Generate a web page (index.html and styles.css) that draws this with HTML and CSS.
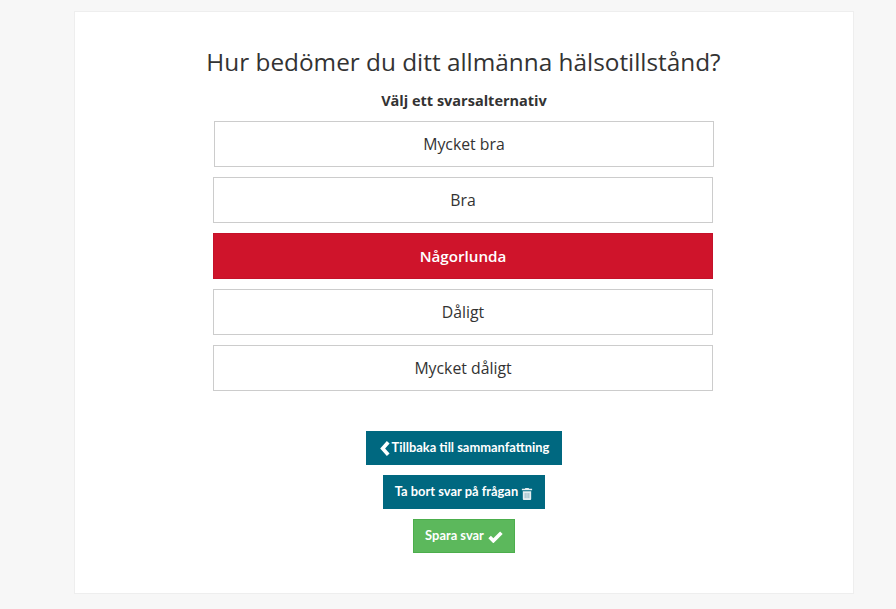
FILE: index.html
```html
<!DOCTYPE html>
<html lang="sv">
<head>
<meta charset="utf-8">
<title>Hälsotillstånd</title>
<link rel="stylesheet" href="styles.css">
</head>
<body>
<main class="card">
  <h1 class="title">Hur bedömer du ditt allmänna hälsotillstånd?</h1>
  <p class="hint">Välj ett svarsalternativ</p>
  <div class="options">
    <button class="option option-first">Mycket bra</button>
    <button class="option">Bra</button>
    <button class="option selected">Någorlunda</button>
    <button class="option">Dåligt</button>
    <button class="option">Mycket dåligt</button>
  </div>
  <div class="actions">
    <button class="btn btn-blue btn-back"><svg class="ico-chev" viewBox="0 0 10 14"><path d="M8 1.200 2.800 7 8 12.800" fill="none" stroke="#fff" stroke-width="3.400"/></svg>Tillbaka till sammanfattning</button>
    <button class="btn btn-blue btn-del">Ta bort svar på frågan<svg class="ico-trash" viewBox="0 0 12 14"><path d="M4 2V1h4v1h3.500v1.500H.5V2zM1.500 4.500h9V13a1 1 0 0 1-1 1h-7a1 1 0 0 1-1-1z" fill="#e4edf0"/><path d="M4 6.500V12M6 6.500V12M8 6.500V12" stroke="#7fa9b7" stroke-width=".8"/></svg></button>
    <button class="btn btn-green btn-save">Spara svar<svg class="ico-check" viewBox="0 0 14 11"><path d="M1.500 5.500 5 9l7.500-7.500" fill="none" stroke="#fff" stroke-width="3.400"/></svg></button>
  </div>
</main>
</body>
</html>
```
FILE: styles.css
```css
* { box-sizing: border-box; }
html, body { margin: 0; height: 100%; }
body {
  background: #f7f7f7;
  font-family: "Open Sans", "Noto Sans", sans-serif;
  color: #333;
  padding: 11px 42px 15px 74px;
  overflow: hidden;
}
.card {
  width: 780px;
  height: 583px;
  background: #fff;
  border: 1px solid #eee;
  padding-top: 33px;
  display: flex;
  flex-direction: column;
  align-items: center;
}
.title {
  margin: 0 0 0 -1px;
  font-size: 24.350px;
  font-weight: 400;
  line-height: 34px;
}
.hint {
  margin: 12px 0 0;
  font-size: 14.500px;
  font-weight: 700;
  line-height: 20px;
}
.options {
  margin: 10px 0 0 -2px;
  display: flex;
  flex-direction: column;
  gap: 10px;
  width: 500px;
}
.option {
  height: 46px;
  width: 500px;
  background: #fff;
  border: 1px solid #ccc;
  font-family: inherit;
  font-size: 15.800px;
  color: #333;
  padding: 0;
}
.option-first { margin-left: 1px; }
.selected {
  background: #cf142b;
  border-color: #c4122a;
  color: #fff;
  font-size: 15.200px;
  font-weight: 600;
}
.actions {
  margin-top: 40px;
  display: flex;
  flex-direction: column;
  align-items: center;
  gap: 10px;
}
.btn {
  height: 34px;
  border: 1px solid transparent;
  font-family: Lato, "Open Sans", sans-serif;
  font-size: 12.900px;
  font-weight: 700;
  color: #fff;
  padding: 0 0 2px;
  display: flex;
  align-items: center;
  justify-content: center;
}
.btn-back { width: 196px; }
.btn-del { width: 162px; }
.btn-save { width: 102px; }
.btn-blue { background: #006880; }
.btn-green { background: #5cb85c; border-color: #4cae4c; }
.ico-chev { width: 12px; height: 15px; margin: 2px 1px 0 0; }
.ico-trash { width: 12px; height: 13px; margin: 4px 0 0 3px; }
.ico-check { width: 15px; height: 12px; margin: 3px 0 0 4px; }
```
